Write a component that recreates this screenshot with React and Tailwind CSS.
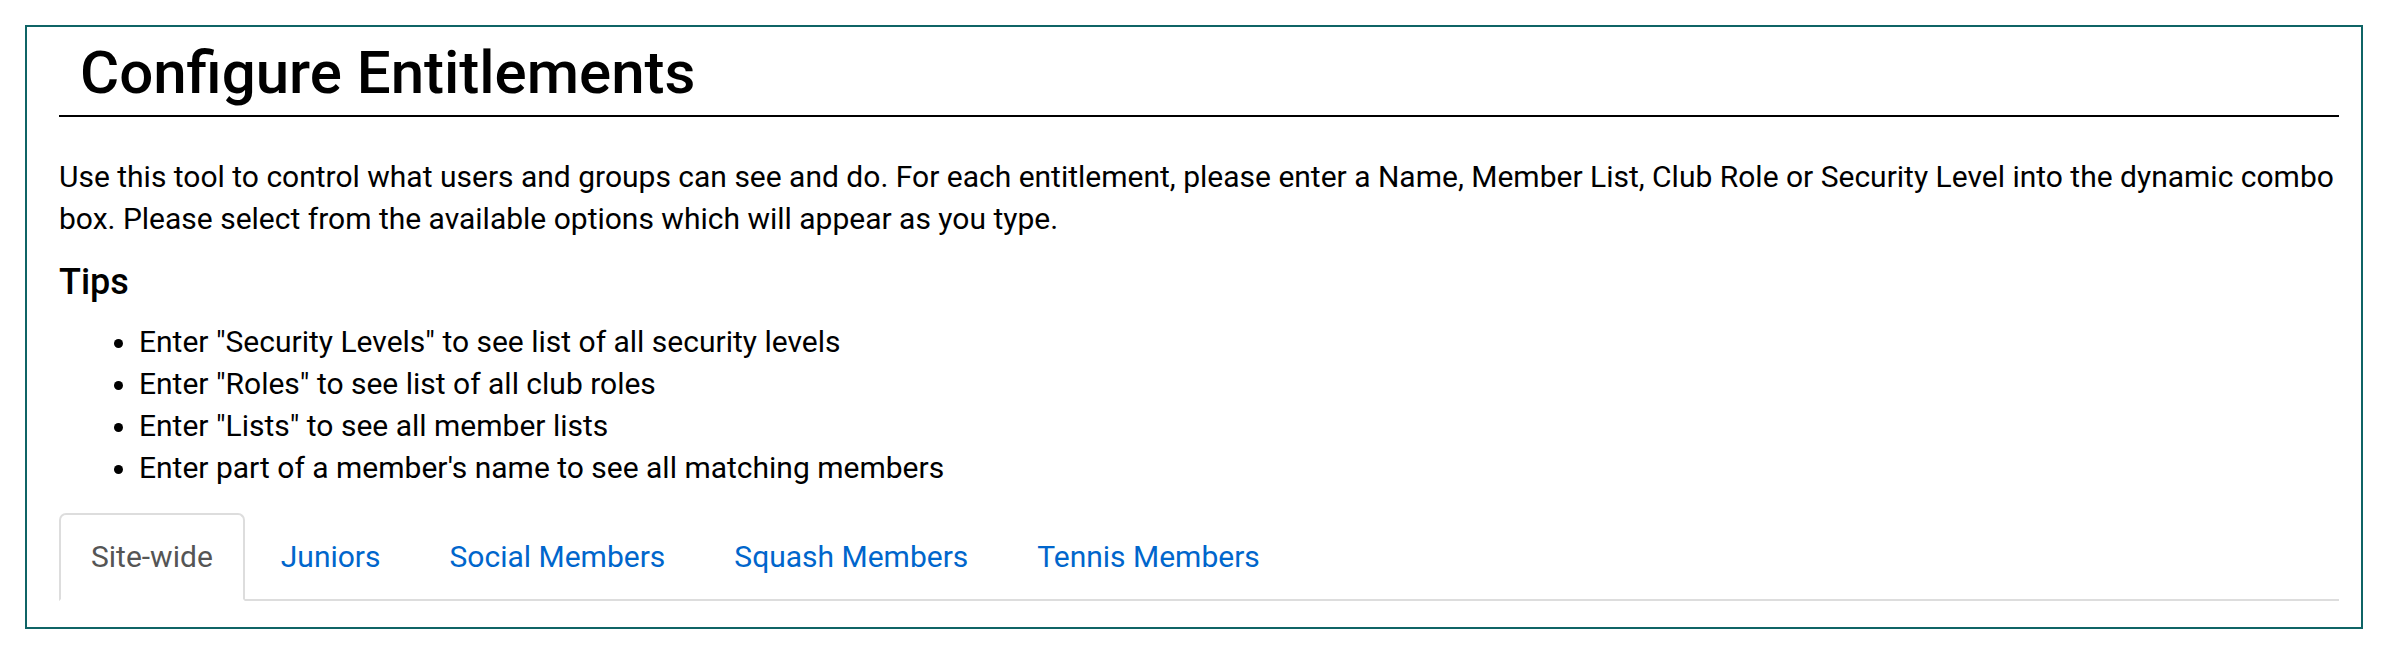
import React from "react";

const tabs = ["Site-wide", "Juniors", "Social Members", "Squash Members", "Tennis Members"];

export default function App() {
  return (
    <div className="bg-white p-[25px] font-['Roboto','Liberation_Sans',sans-serif] text-black">
      <div className="border-2 border-[#0f6466] pl-[32px] pr-[22px] pt-[10px] pb-[26px]">
        <h1 className="border-b-2 border-black pl-[21px] pb-[6px] text-[60px] leading-[72px] font-medium">
          Configure Entitlements
        </h1>
        <p className="mt-[39px] text-[30px] leading-[42px]">
          Use this tool to control what users and groups can see and do. For each entitlement, please enter a Name, Member List, Club Role or Security Level into the dynamic combo box. Please select from the available options which will appear as you type.
        </p>
        <h3 className="mt-[21px] text-[36px] leading-[43px] font-medium">Tips</h3>
        <ul className="mt-[17px] list-disc pl-[80px] text-[30px] leading-[42px]">
          <li>Enter "Security Levels" to see list of all security levels</li>
          <li>Enter "Roles" to see list of all club roles</li>
          <li>Enter "Lists" to see all member lists</li>
          <li>Enter part of a member's name to see all matching members</li>
        </ul>
        <div className="mt-[24px] flex gap-[3px] border-b-2 border-[#dddddd]">
          {tabs.map((t, i) =>
            i === 0 ? (
              <div
                key={t}
                className="-mb-[2px] rounded-t-[7px] border-2 border-[#dddddd] border-b-white bg-white px-[30px] py-[21px] text-[30px] leading-[42px] text-[#555555]"
              >
                {t}
              </div>
            ) : (
              <div
                key={t}
                className="-mb-[2px] rounded-t-[7px] border-2 border-transparent px-[31px] py-[21px] text-[30px] leading-[42px] text-[#0066cc]"
              >
                {t}
              </div>
            )
          )}
        </div>
      </div>
    </div>
  );
}
